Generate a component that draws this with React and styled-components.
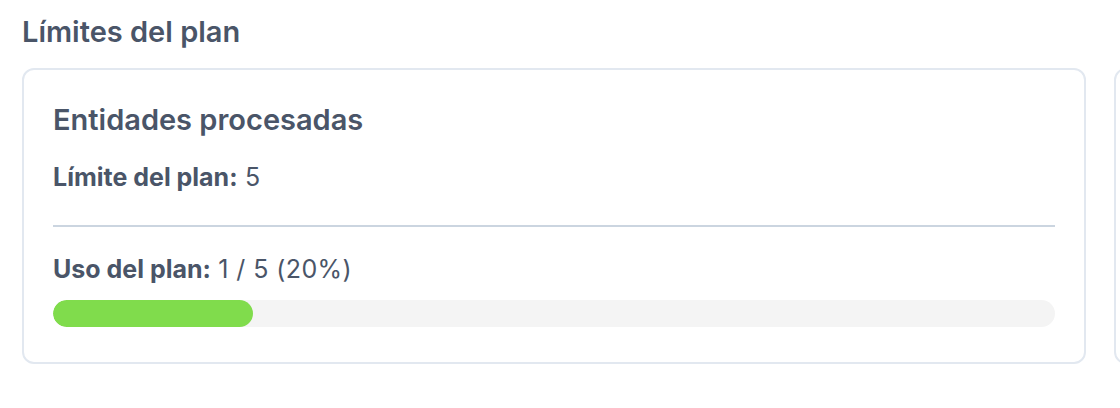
import React from "react";
import styled, { createGlobalStyle } from "styled-components";

const GlobalStyle = createGlobalStyle`
  body {
    margin: 0;
    background: #ffffff;
    font-family: Inter, "Noto Sans", sans-serif;
    color: #4a5568;
  }
`;

const Page = styled.div`
  padding: 14px 0 0 22px;
  overflow: hidden;
  width: 1120px;
  box-sizing: border-box;
`;

const SectionTitle = styled.h2`
  margin: 0 0 18px 0;
  font-size: 29px;
  font-weight: 600;
  line-height: 36px;
  color: #4a5568;
`;

const CardRow = styled.div`
  display: flex;
  gap: 28px;
  width: max-content;
`;

const Card = styled.div`
  width: 1064px;
  box-sizing: border-box;
  border: 2px solid #e2e8f0;
  border-radius: 12px;
  padding: 32px 29px 35px 29px;
  background: #ffffff;
`;

const CardTitle = styled.h3`
  margin: 0 0 23px 0;
  font-size: 29px;
  font-weight: 600;
  line-height: 36px;
`;

const Line = styled.p`
  margin: 0;
  font-size: 25px;
  line-height: 32px;
  font-weight: 400;
  color: #4a5568;
  letter-spacing: 0.4px;

  strong {
    font-weight: 700;
    letter-spacing: 0;
  }
`;

const Divider = styled.hr`
  border: none;
  height: 2px;
  background: #cbd5e0;
  margin: 32px 0 26px 0;
`;

const Track = styled.div`
  margin-top: 15px;
  height: 27px;
  border-radius: 14px;
  background: #f4f4f4;
  overflow: hidden;
`;

const Fill = styled.div`
  height: 100%;
  border-radius: 14px;
  background: #80dc4c;
`;

const limits = [
  { title: "Entidades procesadas", limit: 5, used: 1 },
  { title: "Usuarios", limit: 3, used: 1 },
];

const LimitCard = ({ title, limit, used }) => {
  const pct = Math.round((used / limit) * 100);
  return (
    <Card>
      <CardTitle>{title}</CardTitle>
      <Line>
        <strong>Límite del plan:</strong> {limit}
      </Line>
      <Divider />
      <Line>
        <strong>Uso del plan:</strong> {used} / {limit} ({pct}%)
      </Line>
      <Track>
        <Fill style={{ width: `${pct}%` }} />
      </Track>
    </Card>
  );
};

const App = () => (
  <>
    <GlobalStyle />
    <Page>
      <SectionTitle>Límites del plan</SectionTitle>
      <CardRow>
        {limits.map((l) => (
          <LimitCard key={l.title} {...l} />
        ))}
      </CardRow>
    </Page>
  </>
);

export default App;
